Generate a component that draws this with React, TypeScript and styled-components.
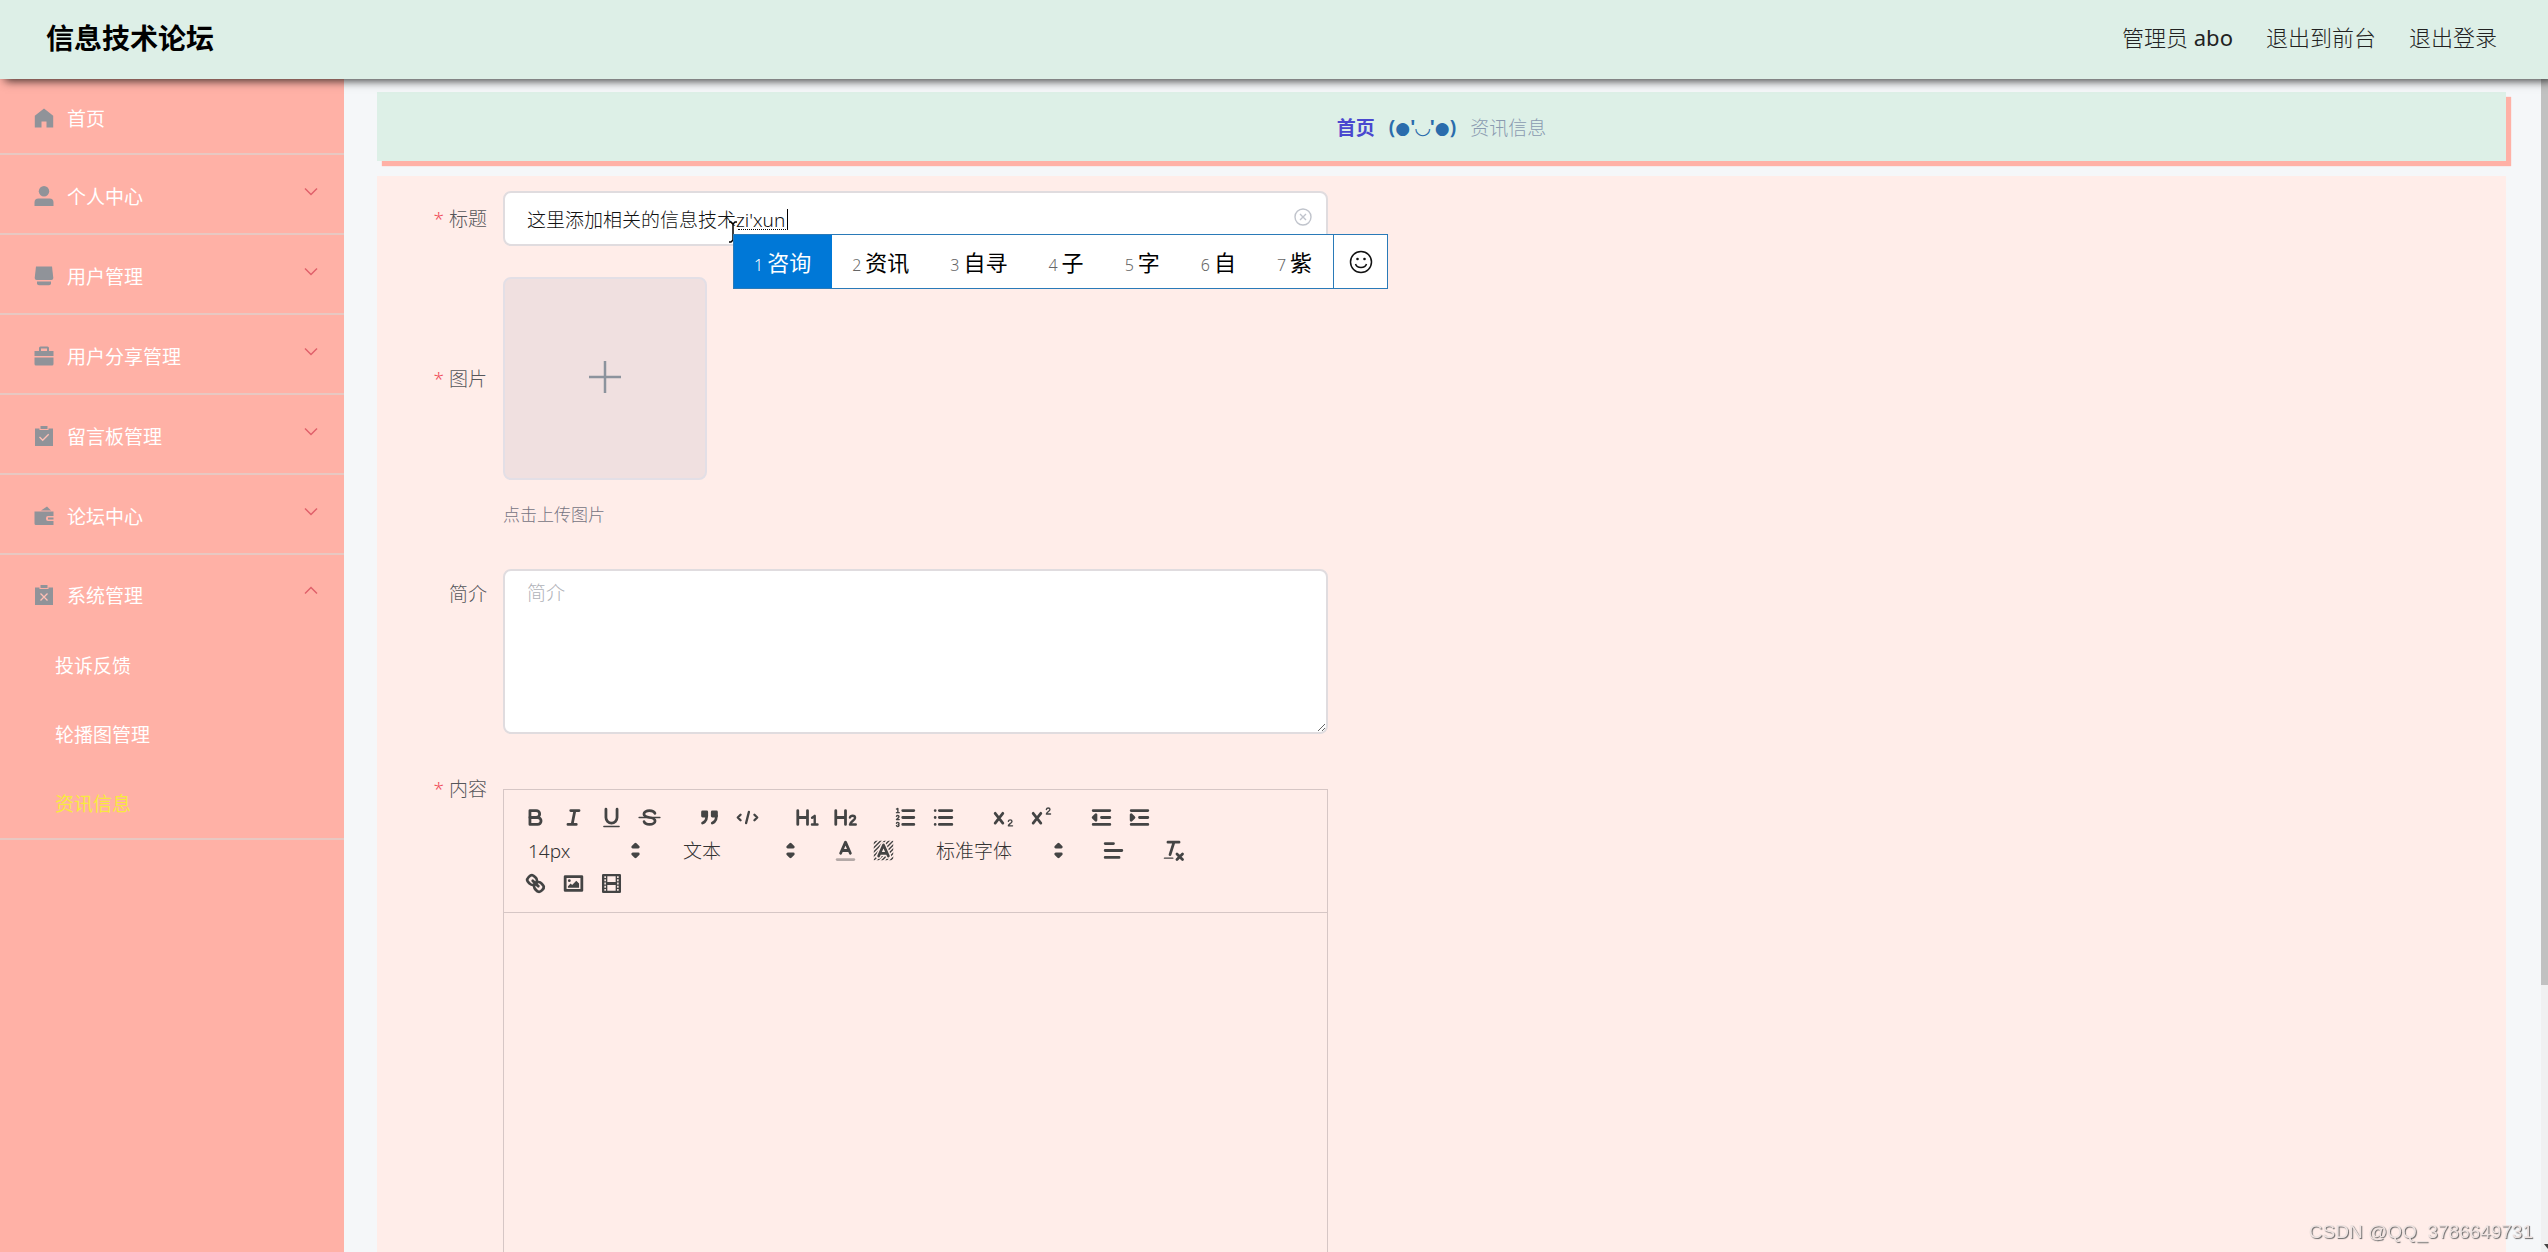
import React from 'react';
import styled, { createGlobalStyle } from 'styled-components';

const Global = createGlobalStyle`
  * { box-sizing: border-box; }
  html, body { margin: 0; padding: 0; }
  body, button, input, textarea, select {
    font-family: "Noto Sans", "Noto Sans CJK SC", "DejaVu Sans", sans-serif;
    font-size: 19px;
    font-weight: 300;
  }
  body { overflow: hidden; background: #f5f7f9; }
`;

const Page = styled.div`
  display: flex;
  flex-direction: column;
  height: 100vh;
`;

const Header = styled.header`
  display: flex;
  align-items: center;
  justify-content: space-between;
  flex: none;
  height: 79px;
  padding: 0 51px 4px 46px;
  background: #ddefe7;
  box-shadow: 5px 2px 9px rgba(0, 0, 0, 0.75);
  position: relative;
  z-index: 2;
`;

const Brand = styled.h1`
  margin: 0;
  font-size: 28px;
  font-weight: 700;
  line-height: 40px;
  color: #000;
`;

const HeaderNav = styled.nav`
  display: flex;
  gap: 33px;
  padding-bottom: 2px;
  font-size: 22px;
  line-height: 32px;
  color: #222;
`;

const UserName = styled.span`
  font-weight: 400;
`;

const HeaderLink = styled.a`
  color: inherit;
  text-decoration: none;
`;

const Columns = styled.div`
  display: flex;
  flex: 1;
  min-height: 0;
`;

const Sidebar = styled.aside`
  flex: none;
  width: 344px;
  background: #ffb1a6;
`;

const MenuGroup = styled.div`
  border-bottom: 2px solid #e8c8c2;
`;

const MenuItem = styled.button<{ $height?: number }>`
  display: flex;
  align-items: center;
  width: 100%;
  height: ${(p) => p.$height ?? 78}px;
  padding: 3px 26px 0 34px;
  border: 0;
  background: none;
  color: #fff;
  font-weight: 400;
  text-align: left;

  & > svg:first-child { flex: none; margin-right: 13px; }
  & > span { flex: 1; }
`;

const Arrow = styled.svg`
  flex: none;
  margin-bottom: 8px;
`;

const SubItem = styled.a<{ $active?: boolean }>`
  display: flex;
  align-items: center;
  height: 69px;
  padding: 0 0 2px 55px;
  color: ${(p) => (p.$active ? '#f8e93f' : '#fff')};
  font-weight: 400;
  text-decoration: none;
`;

const Main = styled.main`
  display: flex;
  flex: 1;
  flex-direction: column;
  gap: 15px;
  min-width: 0;
  padding: 13px 35px 0 33px;
  overflow: hidden;
`;

const Crumbs = styled.nav`
  display: flex;
  align-items: center;
  justify-content: center;
  gap: 14px;
  flex: none;
  height: 69px;
  background: #ddf0e7;
  box-shadow: 5px 5px 1px #ffb1a6;
`;

const CrumbLink = styled.a`
  color: #4a48cf;
  font-weight: 700;
  text-decoration: none;
`;

const CrumbFace = styled.span`
  color: #2a6cac;
  font-weight: 700;
`;

const Cheek = styled.span`
  font-family: "DejaVu Sans", sans-serif;
  font-size: 17px;
`;

const CrumbText = styled.span`
  color: #8a9ab0;
`;

const FormPanel = styled.form`
  flex: none;
  display: flex;
  flex-direction: column;
  padding: 15px 16px 0 16px;
  background: #ffede9;
`;

const Row = styled.div<{ $space: number }>`
  display: flex;
  align-items: flex-start;
  margin-bottom: ${(p) => p.$space}px;
`;

const Label = styled.label<{ $required?: boolean; $top: number }>`
  flex: none;
  width: 110px;
  padding-right: 16px;
  margin-top: ${(p) => p.$top}px;
  line-height: 28px;
  text-align: right;
  color: #55565a;

  &::before {
    content: ${(p) => (p.$required ? "'*'" : 'none')};
    margin-right: 5px;
    color: #f0505c;
  }
`;

const Field = styled.div`
  flex: none;
  position: relative;
  width: 825px;
`;

const TextInput = styled.input`
  display: block;
  width: 100%;
  height: 55px;
  padding: 0 50px 0 22px;
  border: 2px solid #e0dcdf;
  border-radius: 8px;
  outline: none;
  background: #fff;
  color: #111;
`;

const Composing = styled.span`
  position: absolute;
  left: 235px;
  top: 18px;
  width: 50px;
  height: 21px;
  border-right: 1px solid #000;
  border-bottom: 1px dotted #000;
`;

const ClearButton = styled.button`
  position: absolute;
  right: 16px;
  top: 17px;
  display: flex;
  padding: 0;
  border: 0;
  background: none;
`;

const PointerMark = styled.svg`
  position: absolute;
  left: 225px;
  top: 30px;
`;

const Ime = styled.div`
  position: absolute;
  left: 230px;
  top: 43px;
  z-index: 1;
  display: flex;
  height: 55px;
  border: 1px solid #2a7ab8;
  background: #fff;
`;

const Candidate = styled.button<{ $on?: boolean }>`
  display: flex;
  align-items: baseline;
  gap: 4px;
  padding: 9px 21px 0 20px;
  border: 0;
  background: ${(p) => (p.$on ? '#0078d7' : 'transparent')};
  color: ${(p) => (p.$on ? '#fff' : '#000')};
  font-size: 22px;
  font-weight: 400;
  line-height: 36px;
  white-space: nowrap;

  & > small {
    font-size: 16px;
    font-weight: 300;
    color: ${(p) => (p.$on ? '#fff' : '#666')};
  }
`;

const EmojiButton = styled.button`
  display: flex;
  align-items: center;
  justify-content: center;
  width: 54px;
  padding: 0;
  border: 0;
  border-left: 1px solid #2a7ab8;
  background: none;
`;

const UploadBox = styled.button`
  display: flex;
  align-items: center;
  justify-content: center;
  width: 204px;
  height: 203px;
  padding: 0 0 3px;
  border: 2px solid #e3dfe6;
  border-radius: 8px;
  background: #f0e0e0;
`;

const Tip = styled.p`
  margin: 23px 0 0;
  font-size: 17px;
  line-height: 24px;
  color: #767482;
`;

const TextArea = styled.textarea`
  display: block;
  width: 100%;
  height: 165px;
  padding: 8px 22px;
  border: 2px solid #e0dcdf;
  border-radius: 8px;
  outline: none;
  background: #fff;
  line-height: 28px;
  resize: both;

  &::placeholder { color: #b0b2b8; opacity: 1; }
`;

const Toolbar = styled.div`
  display: flex;
  flex-wrap: wrap;
  column-gap: 22px;
  padding: 11px 24px 12px 12px;
  border: 1px solid #d6c6c5;
`;

const ToolGroup = styled.span`
  display: flex;
  height: 33px;
`;

const ToolButton = styled.button`
  display: flex;
  align-items: center;
  justify-content: center;
  width: 38px;
  height: 33px;
  padding: 0;
  border: 0;
  background: none;
`;

const Picker = styled.span<{ $wide?: boolean }>`
  position: relative;
  display: flex;
  width: ${(p) => (p.$wide ? 148 : 133)}px;

  & > svg {
    position: absolute;
    right: 1px;
    top: 4px;
    pointer-events: none;
  }
`;

const PickerSelect = styled.select`
  width: 100%;
  padding: 0 30px 0 12px;
  border: 0;
  outline: none;
  appearance: none;
  background: none;
  color: #333;
  line-height: 32px;
`;

const EditorBody = styled.div`
  min-height: 600px;
  padding: 18px 22px;
  border: 1px solid #d6c6c5;
  border-top: 0;
  outline: none;
`;

const ScrollTrack = styled.div`
  flex: none;
  display: flex;
  flex-direction: column;
  justify-content: space-between;
  width: 7px;
  background: #f0f0f1;
  overflow: hidden;
`;

const ScrollThumb = styled.div`
  height: 77.2%;
  background: #c1c1c1;
`;

const ScrollArrow = styled.svg`
  margin: 0 0 3px 3px;
`;

const Watermark = styled.div`
  position: fixed;
  right: 15px;
  bottom: 8px;
  z-index: 3;
  font-family: "Liberation Sans", Arial, sans-serif;
  font-size: 19px;
  font-weight: 400;
  line-height: 24px;
  color: #eee3e1;
  text-shadow: 1px 1px 1px #666;
`;

const sideIcons: Record<string, React.ReactNode> = {
  home: <path d="M10 .5 .8 7.8V19.500H7.500V13.500h5V19.500h6.700V7.800z" />,
  user: (
    <>
      <circle cx="10" cy="5.200" r="5.200" />
      <path d="M.5 20v-3.500a4 4 0 0 1 4-4h11a4 4 0 0 1 4 4V20z" />
    </>
  ),
  shop: (
    <>
      <path d="M2 .5h16l1.300 11.500a2 2 0 0 1-2 2H2.700a2 2 0 0 1-2-2z" />
      <path d="M3 15.500h14v1.800a2 2 0 0 1-2 2H5a2 2 0 0 1-2-2z" />
    </>
  ),
  case: (
    <>
      <path d="M5 5V2a1.500 1.500 0 0 1 1.500-1.500h7A1.500 1.500 0 0 1 15 2v3h4.500v5H.5V5zm2 0h6V2.500H7z" />
      <path d="M.5 11.500h19V18a1.500 1.500 0 0 1-1.500 1.500H2A1.500 1.500 0 0 1 .5 18z" />
    </>
  ),
  check: (
    <>
      <path d="M6.500 0h7v3h-7z" />
      <path d="M1 2.500h4.500V4h9V2.500H19V20H1z" />
      <path d="m5.500 11 3.200 3.300 6-6" fill="none" stroke="#ffc0b5" strokeWidth="1.300" />
    </>
  ),
  wallet: (
    <>
      <path d="M7 4.500 13 .500l4 4z" />
      <path d="M.5 5.500h19V10H14a2 2 0 0 0-2 2v1a2 2 0 0 0 2 2h5.500v4H2a1.500 1.500 0 0 1-1.500-1.500z" />
      <path d="M14 11.500h5.500v2H14z" />
    </>
  ),
  cross: (
    <>
      <path d="M6.500 0h7v3h-7z" />
      <path d="M1 2.500h4.500V4h9V2.500H19V20H1z" />
      <path d="m6.500 8.500 7 7m0-7-7 7" fill="none" stroke="#ffc0b5" strokeWidth="1.300" />
    </>
  ),
};

const SideIcon = ({ name }: { name: string }) => (
  <svg width="20" height="20" viewBox="0 0 20 20" fill="#909399" aria-hidden="true">
    {sideIcons[name]}
  </svg>
);

const menu = [
  { icon: 'home', text: '首页' },
  { icon: 'user', text: '个人中心' },
  { icon: 'shop', text: '用户管理' },
  { icon: 'case', text: '用户分享管理' },
  { icon: 'check', text: '留言板管理' },
  { icon: 'wallet', text: '论坛中心' },
];

const subMenu = ['投诉反馈', '轮播图管理', '资讯信息'];

const ink = '#444';

const tools: Record<string, React.ReactNode> = {
  加粗: (
    <>
      <path d="M5 4h4.500a2.500 2.500 0 0 1 0 5H5z" />
      <path d="M5 9h5.500a2.500 2.500 0 0 1 0 5H5z" />
    </>
  ),
  斜体: <path d="M7 4h6M5 14h6M8 14l2-10" />,
  下划线: (
    <>
      <path d="M5 3v6a4 4 0 0 0 8 0V3" />
      <rect x="3" y="15" width="12" height="1" rx=".5" fill={ink} stroke="none" />
    </>
  ),
  删除线: (
    <>
      <path d="M1.500 9h15" strokeWidth="1" />
      <path d="M12.900 6C12.500 4.900 11 4 9 4 6.700 4 5 5.200 5 6.500 5 8 6.200 8.500 9 9c2.800.4 4 1 4 2.500 0 1.400-1.700 2.500-4 2.500-2 0-3.500-.8-3.900-2" />
    </>
  ),
  引用: (
    <>
      <rect x="4" y="5" width="3" height="3" fill={ink} />
      <rect x="11" y="5" width="3" height="3" fill={ink} />
      <path d="M7 8c0 4-3 5-3 5M14 8c0 4-3 5-3 5" />
    </>
  ),
  代码: <path d="M4 7 2 9l2 2M14 7l2 2-2 2M10 5 8 13" strokeWidth="1.700" />,
  一级标题: (
    <>
      <path d="M2 4v10M9 4v10M2 9h7" />
      <path d="m12.300 9.200 1.900-1.400V14M12.200 14h4" strokeWidth="1.700" />
    </>
  ),
  二级标题: (
    <>
      <path d="M2 4v10M9 4v10M2 9h7" />
      <path d="M12.200 9c.3-1 1-1.300 1.900-1.300 1.100 0 1.800.7 1.800 1.600 0 1.600-3.700 2.900-3.700 4.700h4.200" strokeWidth="1.700" />
    </>
  ),
  有序列表: (
    <>
      <path d="M7 4h8M7 9h8M7 14h8" />
      <path d="M2.500 5.500h2M2.500 2.900l1-.4v3M4.500 10.500h-2c0-.2 1.850-1.100 1.850-2.200a.96.96 0 0 0-1.850-.1M2.500 14.800a.96.96 0 0 0 1.850-.1.700.7 0 0 0-.6-.7.700.7 0 0 0 .6-.7.96.96 0 0 0-1.850-.1" strokeWidth="1" />
    </>
  ),
  无序列表: <path d="M6 4h9M6 9h9M6 14h9M3 4h0M3 9h0M3 14h0" />,
  下标: (
    <>
      <path d="m3 6 5.500 7M8.500 6 3 13" />
      <path d="M12.500 11.700c.2-.7.700-1 1.300-1 .8 0 1.300.5 1.300 1.100 0 1.200-2.600 2-2.600 3.200h3" strokeWidth="1" />
    </>
  ),
  上标: (
    <>
      <path d="m3 6 5.500 7M8.500 6 3 13" />
      <path d="M12.500 3.200c.2-.7.700-1 1.300-1 .8 0 1.300.5 1.300 1.100 0 1.200-2.600 2-2.600 3.200h3" strokeWidth="1" />
    </>
  ),
  减少缩进: (
    <>
      <path d="M3 14h12M3 4h12M9 9h6" />
      <path d="M5 7v4L3 9z" fill={ink} />
    </>
  ),
  增加缩进: (
    <>
      <path d="M3 14h12M3 4h12M9 9h6" />
      <path d="M3 7v4l2-2z" fill={ink} />
    </>
  ),
  文字颜色: (
    <>
      <path d="M3 15.500h12" opacity=".4" />
      <path d="M5.500 11 9 3l3.500 8M6.500 9h5" />
    </>
  ),
  背景颜色: (
    <>
      <clipPath id="hatch">
        <rect x="2" y="2" width="14" height="14" />
      </clipPath>
      <path
        clipPath="url(#hatch)"
        d="M1 5l4-4M1 8l7-7M1 11 11 1M1 14 14 1M1 17 17 1M4 17 17 4M7 17 17 7M10 17l7-7M13 17l4-4"
        strokeWidth="1"
        strokeLinecap="butt"
      />
      <path d="M5.500 13 9 5l3.500 8M6.500 11h5" stroke="#ffede9" strokeWidth="4" />
      <path d="M5.500 13 9 5l3.500 8M6.500 11h5" />
    </>
  ),
  对齐: <path d="M3 9h12M3 14h10M3 4h6" />,
  清除格式: (
    <>
      <path d="M5 3h8M6.500 12 9.350 3M11.500 11.500l4 4M15.500 11.500l-4 4" />
      <rect x="2" y="14" width="7" height="1" rx=".5" fill={ink} stroke="none" />
    </>
  ),
  链接: (
    <>
      <path d="M7 7l4 4" />
      <path d="M8.900 4.577a3.476 3.476 0 0 1 .36 4.679A3.476 3.476 0 0 1 4.577 8.900C3.185 7.500 2.035 6.400 4.217 4.217S7.500 3.185 8.900 4.577Z" />
      <path d="M13.423 9.100a3.476 3.476 0 0 0-4.679-.36 3.476 3.476 0 0 0 .36 4.679c1.392 1.392 2.500 2.542 4.679.36S14.815 10.500 13.423 9.100Z" />
    </>
  ),
  图片: (
    <>
      <rect x="3" y="4" width="12" height="10" />
      <circle cx="6" cy="7" r="1" fill={ink} stroke="none" />
      <path d="M5 12v-1l2-2 1 1 3-3 2 2v3z" fill={ink} stroke="none" />
    </>
  ),
  视频: (
    <>
      <rect x="3" y="3" width="12" height="12" strokeWidth="1.700" />
      <path d="M5.500 3v12M12.500 3v12M3 5.500h2.500M3 7.800h2.500M3 10.200h2.500M3 12.500h2.500M12.500 5.500H15M12.500 7.800H15M12.500 10.200H15M12.500 12.500H15" strokeWidth="1" />
      <path d="M6 9h6" />
    </>
  ),
};

const ToolSvg = ({ children }: { children: React.ReactNode }) => (
  <svg
    width="25"
    height="25"
    viewBox="0 0 18 18"
    fill="none"
    stroke={ink}
    strokeWidth="2"
    strokeLinecap="round"
    strokeLinejoin="round"
    aria-hidden="true"
  >
    {children}
  </svg>
);

const Tools = ({ names }: { names: string[] }) => (
  <ToolGroup>
    {names.map((n) => (
      <ToolButton key={n} type="button" aria-label={n}>
        <ToolSvg>{tools[n]}</ToolSvg>
      </ToolButton>
    ))}
  </ToolGroup>
);

const ToolPicker = ({ label, value, wide }: { label: string; value: string; wide?: boolean }) => (
  <Picker $wide={wide}>
    <PickerSelect aria-label={label} defaultValue={value}>
      <option>{value}</option>
    </PickerSelect>
    <ToolSvg>
      <path d="M7 11.500h4l-2 2zM7 6.500h4l-2-2z" fill={ink} />
    </ToolSvg>
  </Picker>
);

const candidates = ['咨询', '资讯', '自寻', '子', '字', '自', '紫'];

const MenuArrow = ({ up }: { up?: boolean }) => (
  <Arrow width="14" height="9" viewBox="0 0 14 9" fill="none" stroke="#e0606a" strokeWidth="1.500" aria-hidden="true">
    <path d={up ? 'M1 7.500 7 1.500l6 6' : 'M1 1.500l6 6 6-6'} />
  </Arrow>
);

export default function App() {
  return (
    <Page>
      <Global />
      <Header>
        <Brand>信息技术论坛</Brand>
        <HeaderNav>
          <span>管理员 <UserName>abo</UserName></span>
          <HeaderLink href="#front">退出到前台</HeaderLink>
          <HeaderLink href="#logout">退出登录</HeaderLink>
        </HeaderNav>
      </Header>
      <Columns>
        <Sidebar>
          {menu.map((m, i) => (
            <MenuGroup key={m.text}>
              <MenuItem type="button" $height={i === 0 ? 74 : 78}>
                <SideIcon name={m.icon} />
                <span>{m.text}</span>
                {i > 0 && <MenuArrow />}
              </MenuItem>
            </MenuGroup>
          ))}
          <MenuGroup>
            <MenuItem type="button" $height={76} aria-expanded="true">
              <SideIcon name="cross" />
              <span>系统管理</span>
              <MenuArrow up />
            </MenuItem>
            {subMenu.map((s, i) => (
              <SubItem key={s} href={`#sub${i}`} $active={i === 2}>
                {s}
              </SubItem>
            ))}
          </MenuGroup>
        </Sidebar>
        <Main>
          <Crumbs>
            <CrumbLink href="#home">首页</CrumbLink>
            <CrumbFace>
              (<Cheek>●</Cheek>'◡'<Cheek>●</Cheek>)
            </CrumbFace>
            <CrumbText>资讯信息</CrumbText>
          </Crumbs>
          <FormPanel>
            <Row $space={31}>
              <Label htmlFor="title" $required $top={14}>标题</Label>
              <Field>
                <TextInput id="title" defaultValue="这里添加相关的信息技术zi'xun" />
                <Composing />
                <ClearButton type="button" aria-label="清空">
                  <svg width="18" height="18" viewBox="0 0 18 18" fill="none" stroke="#c0c4cc" strokeWidth="1.400">
                    <circle cx="9" cy="9" r="8" />
                    <path d="m6 6 6 6m0-6-6 6" />
                  </svg>
                </ClearButton>
                <PointerMark width="10" height="22" viewBox="0 0 10 22" fill="none" stroke="#000" strokeWidth="1.500">
                  <path d="M1 1h2l2 2 2-2h2M5 3v16M1 21h2l2-2 2 2h2" />
                </PointerMark>
                <Ime>
                  {candidates.map((c, i) => (
                    <Candidate key={c} type="button" $on={i === 0}>
                      <small>{i + 1}</small>
                      {c}
                    </Candidate>
                  ))}
                  <EmojiButton type="button" aria-label="表情">
                    <svg width="24" height="24" viewBox="0 0 24 24" fill="none" stroke="#111" strokeWidth="1.500">
                      <circle cx="12" cy="12" r="10.500" />
                      <path d="M6.500 14c1.500 4.500 9.500 4.500 11 0" />
                      <circle cx="8.500" cy="9" r="1.300" fill="#111" stroke="none" />
                      <circle cx="15.500" cy="9" r="1.300" fill="#111" stroke="none" />
                    </svg>
                  </EmojiButton>
                </Ime>
              </Field>
            </Row>
            <Row $space={42}>
              <Label htmlFor="picture" $required $top={88}>图片</Label>
              <Field>
                <UploadBox id="picture" type="button">
                  <svg width="32" height="32" viewBox="0 0 32 32" stroke="#8c939d" strokeWidth="2.500" aria-hidden="true">
                    <path d="M16 0v32M0 16h32" />
                  </svg>
                </UploadBox>
                <Tip>点击上传图片</Tip>
              </Field>
            </Row>
            <Row $space={55}>
              <Label htmlFor="intro" $top={11}>简介</Label>
              <Field>
                <TextArea id="intro" placeholder="简介" />
              </Field>
            </Row>
            <Row $space={40}>
              <Label id="content-label" as="span" $required $top={-14}>内容</Label>
              <Field>
                <Toolbar role="toolbar">
                  <Tools names={['加粗', '斜体', '下划线', '删除线']} />
                  <Tools names={['引用', '代码']} />
                  <Tools names={['一级标题', '二级标题']} />
                  <Tools names={['有序列表', '无序列表']} />
                  <Tools names={['下标', '上标']} />
                  <Tools names={['减少缩进', '增加缩进']} />
                  <ToolGroup><ToolPicker label="字号" value="14px" /></ToolGroup>
                  <ToolGroup><ToolPicker label="段落" value="文本" /></ToolGroup>
                  <Tools names={['文字颜色', '背景颜色']} />
                  <ToolGroup><ToolPicker label="字体" value="标准字体" wide /></ToolGroup>
                  <Tools names={['对齐']} />
                  <Tools names={['清除格式']} />
                  <Tools names={['链接', '图片', '视频']} />
                </Toolbar>
                <EditorBody
                  role="textbox"
                  aria-multiline="true"
                  aria-labelledby="content-label"
                  contentEditable
                  suppressContentEditableWarning
                />
              </Field>
            </Row>
          </FormPanel>
        </Main>
        <ScrollTrack>
          <ScrollThumb />
          <ScrollArrow width="8" height="5" viewBox="0 0 8 5" fill="#444" aria-hidden="true">
            <path d="M0 0h8L4 5z" />
          </ScrollArrow>
        </ScrollTrack>
      </Columns>
      <Watermark>CSDN @QQ_3786649731</Watermark>
    </Page>
  );
}
